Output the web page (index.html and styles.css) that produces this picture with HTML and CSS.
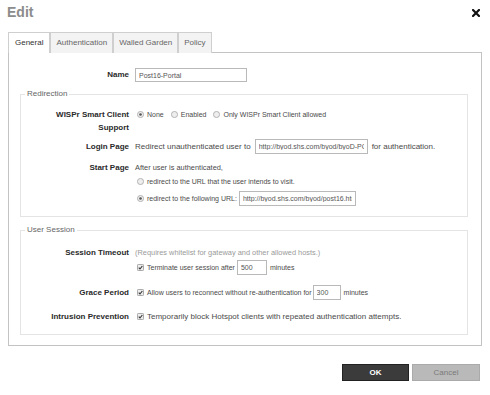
FILE: index.html
```html
<!DOCTYPE html>
<html>
<head>
<meta charset="utf-8">
<title>Edit</title>
<link rel="stylesheet" href="styles.css">
</head>
<body>
<div class="dialog">
  <header class="head">
    <h1 class="title">Edit</h1>
    <span class="close"><svg width="8" height="8" viewBox="0 0 8 8"><path d="M1 1L7 7M7 1L1 7" stroke="#111" stroke-width="2.2" stroke-linecap="square"/></svg></span>
  </header>
  <nav class="tabs">
    <span class="tab active">General</span>
    <span class="tab">Authentication</span>
    <span class="tab">Walled Garden</span>
    <span class="tab">Policy</span>
  </nav>
  <div class="panel">
    <div class="row name-row">
      <div class="lbl">Name</div>
      <div class="val"><input class="txt w-name" value="Post16-Portal"></div>
    </div>

    <fieldset class="group g-redirect">
      <legend>Redirection</legend>
      <div class="row r-wispr">
        <div class="lbl">WISPr Smart Client<br>Support</div>
        <div class="val line small">
          <span class="opt"><svg class="rd" viewBox="0 0 8 8"><circle cx="4" cy="4" r="3.5" fill="#eee" stroke="#aaa"/><circle cx="4" cy="4" r="1.5" fill="#555"/></svg>None</span>
          <span class="opt"><svg class="rd" viewBox="0 0 8 8"><circle cx="4" cy="4" r="3.5" fill="#eee" stroke="#aaa"/></svg>Enabled</span>
          <span class="opt"><svg class="rd" viewBox="0 0 8 8"><circle cx="4" cy="4" r="3.5" fill="#eee" stroke="#aaa"/></svg>Only WISPr Smart Client allowed</span>
        </div>
      </div>
      <div class="row r-login">
        <div class="lbl">Login Page</div>
        <div class="val line tall">Redirect unauthenticated user to<input class="txt w-login" value="http://byod.shs.com/byod/byoD-POS">for authentication.</div>
      </div>
      <div class="row r-start">
        <div class="lbl">Start Page</div>
        <div class="val">
          <div class="line mid">After user is authenticated,</div>
          <div class="line small sub1"><svg class="rd" viewBox="0 0 8 8"><circle cx="4" cy="4" r="3.5" fill="#eee" stroke="#aaa"/></svg>redirect to the URL that the user intends to visit.</div>
          <div class="line small tall sub2"><svg class="rd" viewBox="0 0 8 8"><circle cx="4" cy="4" r="3.5" fill="#eee" stroke="#aaa"/><circle cx="4" cy="4" r="1.5" fill="#555"/></svg>redirect to the following URL:<input class="txt w-start" value="http://byod.shs.com/byod/post16.html"></div>
        </div>
      </div>
    </fieldset>

    <fieldset class="group g-session">
      <legend>User Session</legend>
      <div class="row r-timeout">
        <div class="lbl">Session Timeout</div>
        <div class="val">
          <div class="line mid hint">(Requires whitelist for gateway and other allowed hosts.)</div>
          <div class="line small tall sub1"><svg class="cb" viewBox="0 0 8 8"><rect x="0.5" y="0.5" width="7" height="7" rx="1" fill="#eee" stroke="#999"/><path d="M2 4.2L3.4 5.7L6.1 2.3" fill="none" stroke="#333" stroke-width="1.3"/></svg>Terminate user session after<input class="txt w-min" value="500">minutes</div>
        </div>
      </div>
      <div class="row r-grace">
        <div class="lbl">Grace Period</div>
        <div class="val line small tall"><svg class="cb" viewBox="0 0 8 8"><rect x="0.5" y="0.5" width="7" height="7" rx="1" fill="#eee" stroke="#999"/><path d="M2 4.2L3.4 5.7L6.1 2.3" fill="none" stroke="#333" stroke-width="1.3"/></svg>Allow users to reconnect without re-authentication for<input class="txt w-grace" value="300">minutes</div>
      </div>
      <div class="row r-intr">
        <div class="lbl">Intrusion Prevention</div>
        <div class="val line"><svg class="cb" viewBox="0 0 8 8"><rect x="0.5" y="0.5" width="7" height="7" rx="1" fill="#eee" stroke="#999"/><path d="M2 4.2L3.4 5.7L6.1 2.3" fill="none" stroke="#333" stroke-width="1.3"/></svg>Temporarily block Hotspot clients with repeated authentication attempts.</div>
      </div>
    </fieldset>
  </div>
  <div class="actions">
    <button class="btn ok">OK</button>
    <button class="btn cancel">Cancel</button>
  </div>
</div>
</body>
</html>
```
FILE: styles.css
```css
* { box-sizing: border-box; }
html, body { margin: 0; background: #fff; }
body {
  font-family: "Liberation Sans", Arial, sans-serif;
  font-size: 8px;
  color: #4a4a4a;
}
.dialog { padding: 0 8px; }

.head {
  height: 32px;
  display: flex;
  justify-content: space-between;
  align-items: flex-start;
}
.title {
  margin: 4px 0 0 -1px;
  font-size: 14px;
  line-height: 17px;
  font-weight: bold;
  color: #8c8c8c;
}
.close { margin: 9px 2px 0 0; display: flex; }

.tabs {
  display: flex;
  height: 21px;
  margin-bottom: -1px;
}
.tab {
  height: 21px;
  line-height: 19px;
  padding: 0 5px;
  border: 1px solid #cfcfcf;
  border-bottom: none;
  background: #f3f3f3;
  color: #666;
  font-size: 8px;
}
.tab.active { background: #fff; color: #333; padding: 0 6px; }

.panel {
  border: 1px solid #c3c3c3;
  padding: 15px 13px 10px 11px;
}

.row {
  display: grid;
  grid-template-columns: 108px 1fr;
  column-gap: 6px;
  align-items: start;
}
.name-row { grid-template-columns: 109px 1fr; }
.lbl {
  text-align: right;
  font-weight: bold;
  color: #2a2a2a;
  line-height: 13px;
}
.name-row .lbl { line-height: 14px; }
.r-login .lbl, .r-grace .lbl { line-height: 15px; }
.line {
  display: flex;
  align-items: center;
  height: 13px;
  white-space: nowrap;
}
.line.tall { height: 15px; }
.small { font-size: 7px; }
.mid { font-size: 7.4px; }

.txt {
  height: 15px;
  border: 1px solid #b9b9b9;
  padding: 0 3px;
  font-family: "Liberation Sans", Arial, sans-serif;
  font-size: 7px;
  color: #555;
  background: #fff;
  margin: 0 4px;
  outline: none;
}
.w-name { width: 112px; height: 14px; margin: 0; }
.w-login { width: 113px; }
.w-start { width: 117px; margin-left: 2px; }
.w-min { width: 30px; margin-left: 2px; margin-right: 3px; }
.w-grace { width: 28px; margin-left: 1px; margin-right: 3px; }

.group {
  margin: 0;
  padding: 0;
  border: 1px solid #e4e4e4;
}
.group legend {
  margin-left: 4px;
  padding: 0 2px;
  line-height: 10px;
  color: #666;
}
.g-redirect { margin-top: 7px; padding: 9px 0 10px; }
.g-session { margin-top: 8px; padding: 11px 0 11px; }

.opt { display: inline-flex; align-items: center; margin-right: 5px; }
.rd, .cb { width: 7px; height: 7px; margin: 0 3px 0 2px; flex: none; }

.r-login { margin-top: 5px; }
.r-start { margin-top: 7px; }
.sub1 { margin-top: 1px; }
.sub2 { margin-top: 3px; }
.hint { color: #9a9a9a; }

.r-grace { margin-top: 10px; }
.r-intr { margin-top: 10px; }

.actions {
  display: flex;
  justify-content: flex-end;
  gap: 3px;
  margin-top: 18px;
  padding-right: 2px;
}
.btn {
  height: 17px;
  font-family: "Liberation Sans", Arial, sans-serif;
  font-size: 8px;
  padding: 0;
  cursor: pointer;
}
.ok {
  width: 67px;
  background: #3b3b3b;
  border: 1px solid #222;
  color: #fff;
  font-weight: bold;
}
.cancel {
  width: 68px;
  background: #b9b9b9;
  border: 1px solid #aaa;
  color: #7a7a7a;
}
```
